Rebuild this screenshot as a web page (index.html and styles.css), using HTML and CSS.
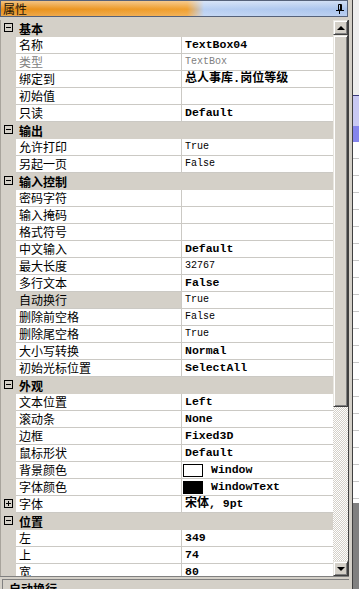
FILE: index.html
```html
<!DOCTYPE html>
<html lang="zh-CN">
<head>
    <meta charset="UTF-8">
    <title>属性</title>
    <link rel="stylesheet" href="styles.css">
</head>
<body>
<div class="window">
    <div class="panel">
        <!-- 标题栏 -->
        <div class="titlebar">
            <span class="title">属性</span>
            <svg class="pin" width="8" height="10" viewBox="0 0 8 10">
                <path d="M2.5 0.5h3v5.5h-3z M4.5 0.5v5.5 M0 6.5h8 M3.5 7v3" fill="none" stroke="#000" stroke-width="1"/>
            </svg>
        </div>

        <div class="grid">
            <div class="rows">
                <!-- 基本 -->
                <div class="row cat">
                    <span class="margin"><svg class="toggle" width="9" height="9" viewBox="0 0 9 9"><rect x="0.5" y="0.5" width="8" height="8" fill="none" stroke="#000"/><path d="M2 4.5h5" stroke="#000"/></svg></span>
                    <span class="label">基本</span>
                </div>
                <div class="row"><span class="margin"></span><span class="name">名称</span><span class="value b">TextBox04</span></div>
                <div class="row"><span class="margin"></span><span class="name dim">类型</span><span class="value dim">TextBox</span></div>
                <div class="row"><span class="margin"></span><span class="name">绑定到</span><span class="value b cjk">总人事库.岗位等级</span></div>
                <div class="row"><span class="margin"></span><span class="name">初始值</span><span class="value"></span></div>
                <div class="row"><span class="margin"></span><span class="name">只读</span><span class="value b">Default</span></div>

                <!-- 输出 -->
                <div class="row cat">
                    <span class="margin"><svg class="toggle" width="9" height="9" viewBox="0 0 9 9"><rect x="0.5" y="0.5" width="8" height="8" fill="none" stroke="#000"/><path d="M2 4.5h5" stroke="#000"/></svg></span>
                    <span class="label">输出</span>
                </div>
                <div class="row"><span class="margin"></span><span class="name">允许打印</span><span class="value">True</span></div>
                <div class="row"><span class="margin"></span><span class="name">另起一页</span><span class="value">False</span></div>

                <!-- 输入控制 -->
                <div class="row cat">
                    <span class="margin"><svg class="toggle" width="9" height="9" viewBox="0 0 9 9"><rect x="0.5" y="0.5" width="8" height="8" fill="none" stroke="#000"/><path d="M2 4.5h5" stroke="#000"/></svg></span>
                    <span class="label">输入控制</span>
                </div>
                <div class="row"><span class="margin"></span><span class="name">密码字符</span><span class="value"></span></div>
                <div class="row"><span class="margin"></span><span class="name">输入掩码</span><span class="value"></span></div>
                <div class="row"><span class="margin"></span><span class="name">格式符号</span><span class="value"></span></div>
                <div class="row"><span class="margin"></span><span class="name">中文输入</span><span class="value b">Default</span></div>
                <div class="row"><span class="margin"></span><span class="name">最大长度</span><span class="value">32767</span></div>
                <div class="row"><span class="margin"></span><span class="name">多行文本</span><span class="value b">False</span></div>
                <div class="row"><span class="margin"></span><span class="name selected">自动换行</span><span class="value">True</span></div>
                <div class="row"><span class="margin"></span><span class="name">删除前空格</span><span class="value">False</span></div>
                <div class="row"><span class="margin"></span><span class="name">删除尾空格</span><span class="value">True</span></div>
                <div class="row"><span class="margin"></span><span class="name">大小写转换</span><span class="value b">Normal</span></div>
                <div class="row"><span class="margin"></span><span class="name">初始光标位置</span><span class="value b">SelectAll</span></div>

                <!-- 外观 -->
                <div class="row cat">
                    <span class="margin"><svg class="toggle" width="9" height="9" viewBox="0 0 9 9"><rect x="0.5" y="0.5" width="8" height="8" fill="none" stroke="#000"/><path d="M2 4.5h5" stroke="#000"/></svg></span>
                    <span class="label">外观</span>
                </div>
                <div class="row"><span class="margin"></span><span class="name">文本位置</span><span class="value b">Left</span></div>
                <div class="row"><span class="margin"></span><span class="name">滚动条</span><span class="value b">None</span></div>
                <div class="row"><span class="margin"></span><span class="name">边框</span><span class="value b">Fixed3D</span></div>
                <div class="row"><span class="margin"></span><span class="name">鼠标形状</span><span class="value b">Default</span></div>
                <div class="row"><span class="margin"></span><span class="name">背景颜色</span><span class="value b color"><span class="swatch white"></span>Window</span></div>
                <div class="row"><span class="margin"></span><span class="name">字体颜色</span><span class="value b color"><span class="swatch black"></span>WindowText</span></div>
                <div class="row">
                    <span class="margin"><svg class="toggle" width="9" height="9" viewBox="0 0 9 9"><rect x="0.5" y="0.5" width="8" height="8" fill="none" stroke="#000"/><path d="M2 4.5h5 M4.5 2v5" stroke="#000"/></svg></span>
                    <span class="name">字体</span><span class="value b"><span class="cjk">宋体</span>, 9pt</span>
                </div>

                <!-- 位置 -->
                <div class="row cat">
                    <span class="margin"><svg class="toggle" width="9" height="9" viewBox="0 0 9 9"><rect x="0.5" y="0.5" width="8" height="8" fill="none" stroke="#000"/><path d="M2 4.5h5" stroke="#000"/></svg></span>
                    <span class="label">位置</span>
                </div>
                <div class="row"><span class="margin"></span><span class="name">左</span><span class="value b">349</span></div>
                <div class="row"><span class="margin"></span><span class="name">上</span><span class="value b">74</span></div>
                <div class="row"><span class="margin"></span><span class="name">宽</span><span class="value b">80</span></div>
            </div>

            <!-- 滚动条 -->
            <div class="scrollbar">
                <div class="sb-btn"><span class="arrow up"></span></div>
                <div class="sb-thumb"></div>
                <div class="sb-track"></div>
                <div class="sb-btn"><span class="arrow down"></span></div>
            </div>
        </div>

        <div class="desc">自动换行</div>
    </div>

    <!-- 后面的窗口 -->
    <div class="backdrop">
        <div class="bg">
            <div class="bg-top"></div>
            <div class="bg-sel"></div>
            <div class="bg-band"></div>
            <div class="bg-lines"></div>
            <div class="bg-dark"></div>
        </div>
    </div>
</div>
</body>
</html>
```

FILE: styles.css
```css
* {
    box-sizing: border-box;
}

body {
    margin: 0;
    width: 359px;
    height: 589px;
    overflow: hidden;
    background: #d4d0c8;
    font-family: "Noto Sans CJK SC", sans-serif;
    font-size: 12px;
    color: #000;
}

.window {
    display: flex;
    height: 589px;
}

.panel {
    width: 349px;
    display: flex;
    flex-direction: column;
}

/* 标题栏 */
.titlebar {
    width: 348px;
    height: 17px;
    margin-bottom: 3px;
    border: 1px solid #56627a;
    padding: 0 3px 0 2px;
    display: flex;
    align-items: center;
    justify-content: space-between;
    background:
        linear-gradient(to bottom, rgba(255,255,255,0.45), rgba(255,255,255,0) 55%, rgba(255,255,255,0.2)),
        linear-gradient(to right, #e8901a 0, #f0a030 186px, #b8cff2 203px, #a9c3ec 100%);
}

.title {
    line-height: 15px;
    color: #1c1408;
}

.pin {
    display: block;
}

/* 属性表 */
.grid {
    display: flex;
    height: 557px;
    border-bottom: 1px solid #808080;
}

.rows {
    width: 333px;
    overflow: hidden;
    background: #d4d0c8;
    box-shadow: inset 1px 0 #a8a49c;
}

.row {
    display: flex;
    height: 17px;
}

.margin {
    width: 16px;
    flex: none;
    padding: 3px 0 0 4px;
}

.toggle {
    display: block;
}

.name {
    width: 166px;
    flex: none;
    background: #fff;
    border-right: 1px solid #cbc9c4;
    border-bottom: 1px solid #cbc9c4;
    padding-left: 3px;
    line-height: 16px;
    white-space: nowrap;
}

.name.selected {
    background: #d4d0c8;
}

.dim {
    color: #808080;
}

.value {
    flex: 1;
    background: #fff;
    border-bottom: 1px solid #cbc9c4;
    padding-left: 3px;
    line-height: 16px;
    font-family: "Liberation Mono", "Noto Sans CJK SC", monospace;
    font-size: 10px;
    white-space: nowrap;
    overflow: hidden;
}

.value.b {
    font-weight: bold;
    font-size: 11.5px;
}

.value .cjk,
.value.cjk {
    font-size: 12px;
}

.value.color {
    display: flex;
    align-items: center;
    padding-left: 1px;
}

.swatch {
    width: 20px;
    height: 13px;
    border: 1px solid #000;
    margin-right: 8px;
}

.swatch.white {
    background: #fff;
}

.swatch.black {
    background: #000;
}

.cat .label {
    padding-left: 3px;
    font-weight: bold;
    line-height: 17px;
}

/* 滚动条 */
.scrollbar {
    width: 16px;
    display: flex;
    flex-direction: column;
    border-right: 1px solid #404040;
}

.sb-btn,
.sb-thumb {
    background: #d4d0c8;
    border: 1px solid;
    border-color: #e8e6e0 #404040 #404040 #e8e6e0;
    box-shadow: inset 1px 1px #fff, inset -1px -1px #808080;
}

.sb-btn {
    height: 15px;
    display: flex;
    align-items: center;
    justify-content: center;
}

.sb-thumb {
    height: 372px;
}

.sb-track {
    flex: 1;
    background: repeating-conic-gradient(#d4d0c8 0 25%, #fff 0 50%) 0 0 / 2px 2px;
}

.arrow {
    width: 0;
    height: 0;
    border-left: 4px solid transparent;
    border-right: 4px solid transparent;
}

.arrow.up {
    border-bottom: 4px solid #000;
}

.arrow.down {
    border-top: 4px solid #000;
}

/* 说明栏 */
.desc {
    margin: 2px 0 0 2px;
    border-top: 1px solid #808080;
    border-left: 1px solid #808080;
    padding: 2px 0 0 6px;
    font-weight: bold;
    line-height: 14px;
    flex: 1;
}

/* 背后窗口 */
.backdrop {
    width: 10px;
    padding-left: 3px;
}

.bg {
    height: 100%;
    border-left: 1px solid #404040;
    display: flex;
    flex-direction: column;
}

.bg-top {
    height: 96px;
    background: #eeeeee;
    border-bottom: 1px solid #3a3a7a;
}

.bg-sel {
    height: 30px;
    background: #c9c9f3;
}

.bg-band {
    height: 16px;
    background: #8585ec;
}

.bg-lines {
    height: 361px;
    background: repeating-linear-gradient(to bottom, #fff 0, #fff 16px, #c8c8c8 16px, #c8c8c8 17px);
}

.bg-dark {
    flex: 1;
    background: #808080;
}
```
